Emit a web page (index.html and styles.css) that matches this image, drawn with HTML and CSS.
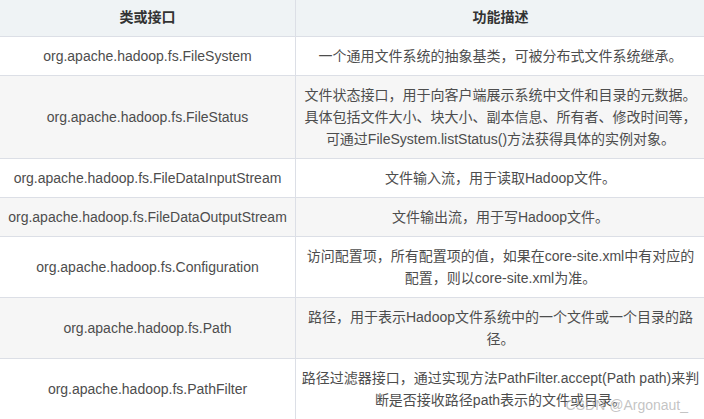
FILE: index.html
```html
<!DOCTYPE html>
<html lang="zh-CN">
<head>
<meta charset="utf-8">
<title>Hadoop FileSystem API</title>
<link rel="stylesheet" href="styles.css">
</head>
<body>
<div class="page">
  <table class="api-table">
    <colgroup>
      <col class="col-name">
      <col class="col-desc">
    </colgroup>
    <thead>
      <tr><th>类或接口</th><th>功能描述</th></tr>
    </thead>
    <tbody>
      <tr><td>org.apache.hadoop.fs.FileSystem</td><td>一个通用文件系统的抽象基类，可被分布式文件系统继承。</td></tr>
      <tr><td>org.apache.hadoop.fs.FileStatus</td><td>文件状态接口，用于向客户端展示系统中文件和目录的元数据。<br>具体包括文件大小、块大小、副本信息、所有者、修改时间等，<br>可通过FileSystem.listStatus()方法获得具体的实例对象。</td></tr>
      <tr><td>org.apache.hadoop.fs.FileDataInputStream</td><td>文件输入流，用于读取Hadoop文件。</td></tr>
      <tr><td>org.apache.hadoop.fs.FileDataOutputStream</td><td>文件输出流，用于写Hadoop文件。</td></tr>
      <tr><td>org.apache.hadoop.fs.Configuration</td><td>访问配置项，所有配置项的值，如果在core-site.xml中有对应的<br>配置，则以core-site.xml为准。</td></tr>
      <tr><td>org.apache.hadoop.fs.Path</td><td>路径，用于表示Hadoop文件系统中的一个文件或一个目录的路<br>径。</td></tr>
      <tr><td>org.apache.hadoop.fs.PathFilter</td><td>路径过滤器接口，通过实现方法PathFilter.accept(Path path)来判<br>断是否接收路径path表示的文件或目录。</td></tr>
    </tbody>
  </table>
  <div class="watermark">CSDN @Argonaut_</div>
</div>
</body>
</html>
```

FILE: styles.css
```css
html, body {
  margin: 0;
  padding: 0;
  background: #ffffff;
  overflow: hidden;
}

.page {
  position: relative;
  width: 704px;
  height: 419px;
  overflow: hidden;
  font-family: "Liberation Sans", "Noto Sans CJK SC", sans-serif;
  font-size: 14px;
  line-height: 22px;
  color: #4d4d4d;
}

.api-table {
  border-collapse: collapse;
  table-layout: fixed;
  width: 706px;
  margin: -3px 0 0 -1px;
}

.col-name { width: 296px; }
.col-desc { width: 410px; }

.api-table th,
.api-table td {
  border: 1px solid #dcdfe6;
  padding: 8px;
  text-align: center;
  vertical-align: middle;
}

.api-table td + td {
  padding: 8px 4px;
  white-space: nowrap;
}

.api-table th {
  background: #eff3f5;
  font-weight: bold;
  color: #333333;
}

.api-table tbody tr:nth-child(even) {
  background: #f6f6f6;
}

.watermark {
  position: absolute;
  right: 16px;
  bottom: 5px;
  font-family: "Liberation Sans", sans-serif;
  font-size: 14px;
  line-height: 18px;
  color: rgba(170, 170, 170, 0.7);
  white-space: nowrap;
}
```
